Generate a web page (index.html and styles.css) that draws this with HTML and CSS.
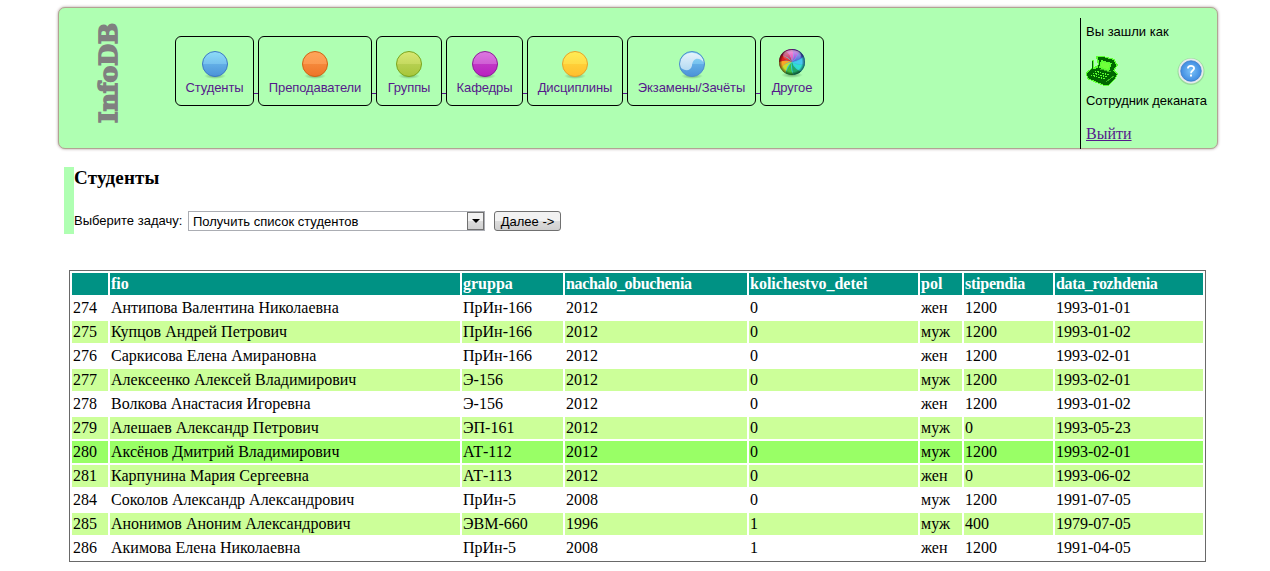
FILE: index.html
```
<!DOCTYPE html>
<html lang="ru">
<head>
<meta charset="utf-8">
<title>InfoDB</title>
<link rel="stylesheet" href="styles.css">
</head>
<body>
<svg class="defs" width="0" height="0">
  <defs>
    <linearGradient id="blue" x2="0" y2="1"><stop offset="0" stop-color="#8edcf8"/><stop offset=".5" stop-color="#76c1ee"/><stop offset=".5" stop-color="#62aee6"/><stop offset="1" stop-color="#4b92d8"/></linearGradient>
    <linearGradient id="orange" x2="0" y2="1"><stop offset="0" stop-color="#ffa55a"/><stop offset=".5" stop-color="#fb9a50"/><stop offset=".5" stop-color="#f5873a"/><stop offset="1" stop-color="#ee7427"/></linearGradient>
    <linearGradient id="green" x2="0" y2="1"><stop offset="0" stop-color="#d8e873"/><stop offset=".5" stop-color="#c5da60"/><stop offset=".5" stop-color="#b6cf50"/><stop offset="1" stop-color="#a7c63a"/></linearGradient>
    <linearGradient id="purple" x2="0" y2="1"><stop offset="0" stop-color="#dc78e0"/><stop offset=".5" stop-color="#cf5fd4"/><stop offset=".5" stop-color="#c136c6"/><stop offset="1" stop-color="#b91fc0"/></linearGradient>
    <linearGradient id="yellow" x2="0" y2="1"><stop offset="0" stop-color="#ffec54"/><stop offset=".5" stop-color="#ffdc48"/><stop offset=".5" stop-color="#ffcf38"/><stop offset="1" stop-color="#ffbe2c"/></linearGradient>
    <linearGradient id="pale" x2="0" y2="1"><stop offset="0" stop-color="#e6f3fb"/><stop offset="1" stop-color="#b5daf3"/></linearGradient>
    <radialGradient id="shade"><stop offset="0" stop-color="#3a6a3c" stop-opacity=".55"/><stop offset="1" stop-color="#3a6a3c" stop-opacity="0"/></radialGradient>
    <radialGradient id="help"><stop offset="0" stop-color="#7cc4fa"/><stop offset="1" stop-color="#3f8be0"/></radialGradient>
    <radialGradient id="rim"><stop offset=".75" stop-color="#000" stop-opacity="0"/><stop offset="1" stop-color="#000" stop-opacity=".6"/></radialGradient>
    <linearGradient id="gloss" x2="0" y2="1"><stop offset="0" stop-color="#fff" stop-opacity=".55"/><stop offset="1" stop-color="#fff" stop-opacity=".05"/></linearGradient>
    <clipPath id="disc"><circle cx="16" cy="14" r="13"/></clipPath>
    <path id="blade" d="M0 0Q7 -3 8 -15L20 -12Q13 -2 0 0z"/>
  </defs>
</svg>
<header class="header">
  <div class="brand"><span class="logo">InfoDB</span></div>
  <nav class="menu">
    <a class="item students" href="#"><svg class="ico" viewBox="0 0 32 32"><ellipse cx="16" cy="28" rx="11" ry="3" fill="url(#shade)"/><circle cx="16" cy="16" r="12.5" fill="url(#blue)" stroke="#3c78c4"/></svg><span>Студенты</span></a>
    <a class="item teachers" href="#"><svg class="ico" viewBox="0 0 32 32"><ellipse cx="16" cy="28" rx="11" ry="3" fill="url(#shade)"/><circle cx="16" cy="16" r="12.5" fill="url(#orange)" stroke="#ce6414"/></svg><span>Преподаватели</span></a>
    <a class="item groups" href="#"><svg class="ico" viewBox="0 0 32 32"><ellipse cx="16" cy="28" rx="11" ry="3" fill="url(#shade)"/><circle cx="16" cy="16" r="12.5" fill="url(#green)" stroke="#7ba51c"/></svg><span>Группы</span></a>
    <a class="item chairs" href="#"><svg class="ico" viewBox="0 0 32 32"><ellipse cx="16" cy="28" rx="11" ry="3" fill="url(#shade)"/><circle cx="16" cy="16" r="12.5" fill="url(#purple)" stroke="#8b1c98"/></svg><span>Кафедры</span></a>
    <a class="item subjects" href="#"><svg class="ico" viewBox="0 0 32 32"><ellipse cx="16" cy="28" rx="11" ry="3" fill="url(#shade)"/><circle cx="16" cy="16" r="12.5" fill="url(#yellow)" stroke="#e5a32a"/></svg><span>Дисциплины</span></a>
    <a class="item exams" href="#"><svg class="ico" viewBox="0 0 32 32"><ellipse cx="16" cy="28" rx="11" ry="3" fill="url(#shade)"/><circle cx="16" cy="16" r="12.5" fill="url(#blue)"/><path d="M3.500 17C5 23 15 24.500 16 17.500C16.500 10 23 8 28.300 15A12.500 12.500 0 0 0 3.500 17z" fill="url(#pale)"/><circle cx="16" cy="16" r="12.500" fill="none" stroke="#4d8ccb"/></svg><span>Экзамены/Зачёты</span></a>
    <a class="item other" href="#"><svg class="ico" viewBox="0 0 32 32"><ellipse cx="16" cy="27" rx="11" ry="3" fill="url(#shade)"/>
      <g clip-path="url(#disc)"><rect width="32" height="32" fill="#38c8d8"/>
        <g transform="translate(16 14)">
          <use href="#blade" fill="#4a62d8" transform="rotate(-5)"/>
          <use href="#blade" fill="#46c8f0" transform="rotate(31)"/>
          <use href="#blade" fill="#30e0d0" transform="rotate(67)"/>
          <use href="#blade" fill="#20a868" transform="rotate(103)"/>
          <use href="#blade" fill="#40c040" transform="rotate(139)"/>
          <use href="#blade" fill="#c8e030" transform="rotate(175)"/>
          <use href="#blade" fill="#f8a828" transform="rotate(205)"/>
          <use href="#blade" fill="#e02020" transform="rotate(235)"/>
          <use href="#blade" fill="#c01850" transform="rotate(267)"/>
          <use href="#blade" fill="#e030b0" transform="rotate(295)"/>
          <use href="#blade" fill="#9430d8" transform="rotate(325)"/>
        </g>
      </g>
      <circle cx="16" cy="14" r="13" fill="url(#rim)"/><ellipse cx="16" cy="7.500" rx="9" ry="5.500" fill="url(#gloss)"/></svg><span>Другое</span></a>
  </nav>
  <div class="user">
    <div class="line who">Вы зашли как</div>
    <div class="icons">
      <svg class="laptop" viewBox="0 0 32 30" shape-rendering="crispEdges">
        <path d="M10 0H17L29 3L30 6L32 9L29 14L32 18L30 22L22 30H18L1 23L0 16L6 12V4H8V11L12 9L11 5z" fill="#5cff33"/>
        <path d="M12 1H17L28 4L29 7L30.500 9L27 15L31 18L29 22L22 29H18L2 22L1 17L6 13V5H7V13L12 12L13 6z" fill="#006600"/>
        <path d="M15 4L26 7L23 15L13 12z" fill="#5cff33"/>
        <path d="M16 6L24 8L22 13L15 11z" fill="#70ff3c"/>
        <path d="M9 15L23 19M7 17L21 21M5 19L19 23" fill="none" stroke="#5cff33" stroke-dasharray="1.500 1"/>
        <path d="M20 26L28 20M14 13L25 16" fill="none" stroke="#38b820"/>
      </svg>
      <svg class="help" viewBox="0 0 30 30"><circle cx="15" cy="15.500" r="13.500" fill="#7aa47b" opacity=".4"/><circle cx="15" cy="15" r="12.500" fill="#e6eaec"/><circle cx="15" cy="15" r="10.300" fill="url(#help)" stroke="#3779c5" stroke-width=".7"/><path d="M11.900 12.500C11.900 9 18.100 9 18.100 12.300C18.100 14.600 15 14.600 15 17.300" fill="none" stroke="#fff" stroke-width="1.800"/><rect x="14" y="18.500" width="2" height="2" fill="#fff"/></svg>
    </div>
    <div class="line role">Сотрудник деканата</div>
    <a class="exit" href="#">Выйти</a>
  </div>
</header>
<main class="content">
  <section class="task">
    <h3>Студенты</h3>
    <form class="form">
      <label>Выберите задачу:</label>
      <div class="select"><span>Получить список студентов</span><i class="arrow"></i></div>
      <button class="next" type="button">Далее -&gt;</button>
    </form>
  </section>
  <table class="data">
    <colgroup><col class="c1"><col class="c2"><col class="c3"><col class="c4"><col class="c5"><col class="c6"><col class="c7"><col class="c8"></colgroup>
    <tr><th></th><th>fio</th><th>gruppa</th><th class="tight">nachalo_obuchenia</th><th>kolichestvo_detei</th><th>pol</th><th class="snug">stipendia</th><th class="tight">data_rozhdenia</th></tr>
    <tr><td>274</td><td>Антипова Валентина Николаевна</td><td>ПрИн-166</td><td>2012</td><td>0</td><td>жен</td><td>1200</td><td>1993-01-01</td></tr>
    <tr class="alt"><td>275</td><td>Купцов Андрей Петрович</td><td>ПрИн-166</td><td>2012</td><td>0</td><td>муж</td><td>1200</td><td>1993-01-02</td></tr>
    <tr><td>276</td><td>Саркисова Елена Амирановна</td><td>ПрИн-166</td><td>2012</td><td>0</td><td>жен</td><td>1200</td><td>1993-02-01</td></tr>
    <tr class="alt"><td>277</td><td>Алексеенко Алексей Владимирович</td><td>Э-156</td><td>2012</td><td>0</td><td>муж</td><td>1200</td><td>1993-02-01</td></tr>
    <tr><td>278</td><td>Волкова Анастасия Игоревна</td><td>Э-156</td><td>2012</td><td>0</td><td>жен</td><td>1200</td><td>1993-01-02</td></tr>
    <tr class="alt"><td>279</td><td>Алешаев Александр Петрович</td><td>ЭП-161</td><td>2012</td><td>0</td><td>муж</td><td>0</td><td>1993-05-23</td></tr>
    <tr class="hover"><td>280</td><td>Аксёнов Дмитрий Владимирович</td><td>АТ-112</td><td>2012</td><td>0</td><td>муж</td><td>1200</td><td>1993-02-01</td></tr>
    <tr class="alt"><td>281</td><td>Карпунина Мария Сергеевна</td><td>АТ-113</td><td>2012</td><td>0</td><td>жен</td><td>0</td><td>1993-06-02</td></tr>
    <tr><td>284</td><td>Соколов Александр Александрович</td><td>ПрИн-5</td><td>2008</td><td>0</td><td>муж</td><td>1200</td><td>1991-07-05</td></tr>
    <tr class="alt"><td>285</td><td>Анонимов Аноним Александрович</td><td>ЭВМ-660</td><td>1996</td><td>1</td><td>муж</td><td>400</td><td>1979-07-05</td></tr>
    <tr><td>286</td><td>Акимова Елена Николаевна</td><td>ПрИн-5</td><td>2008</td><td>1</td><td>жен</td><td>1200</td><td>1991-04-05</td></tr>
  </table>
</main>
</body>
</html>
```
FILE: styles.css
```
* { box-sizing: border-box; }
body { margin: 0; padding: 7px 52px 0 58px; background: #fff; color: #000; font: 16px/18px "Liberation Serif", serif; overflow: hidden; }
.defs { display: block; height: 0; }
.header { display: flex; height: 142px; background: #afffb2; border: 1px solid #b3a393; border-radius: 7px; box-shadow: 0 0 3px #a99; font-family: "Liberation Sans", sans-serif; font-size: 13px; }
.brand { width: 116px; padding: 12px 0 0 36px; }
.logo { display: block; writing-mode: vertical-rl; transform: rotate(180deg); width: 28px; height: 103px; line-height: 28px; font-family: "DejaVu Serif", serif; font-weight: bold; font-size: 25px; letter-spacing: 0; color: #808080; -webkit-text-stroke: 1.6px #808080; }
.menu { display: flex; gap: 4px; padding-top: 28px; }
.item { position: relative; display: flex; flex-direction: column; align-items: center; height: 70px; padding-top: 11px; border: 1px solid #000; border-radius: 6px; color: #551a8b; line-height: 16px; letter-spacing: -.1px; text-decoration: none; white-space: nowrap; }
.item:not(:last-child)::after { content: ""; position: absolute; left: 100%; top: 56px; width: 4px; height: 1px; margin-left: 1px; background: #551a8b; }
.ico { display: block; width: 32px; height: 32px; flex: none; }
.students { width: 79px; }
.teachers { width: 114px; }
.groups { width: 66px; }
.chairs { width: 77px; }
.subjects { width: 96px; }
.exams { width: 129px; }
.other { width: 64px; }
.user { width: 137px; height: 131px; margin: 10px 0 0 auto; padding-left: 5px; border-left: 1px solid #000; }
.line { line-height: 16px; white-space: nowrap; }
.who { padding-top: 6px; }
.icons { display: flex; justify-content: space-between; width: 120px; height: 53px; padding-top: 16px; }
.laptop { width: 32px; height: 30px; }
.help { width: 30px; height: 30px; }
.role { letter-spacing: -.05px; }
.exit { display: inline-block; margin-top: 16px; font: 16px/18px "Liberation Serif", serif; color: #551a8b; }
.content { padding: 18px 0 0 6px; }
.task { width: 600px; height: 67px; border-left: 10px solid #afffb2; }
h3 { margin: 0; font-size: 19px; line-height: 22px; letter-spacing: .2px; }
.form { display: flex; align-items: center; height: 21px; margin-top: 21px; font: 13px/16px "Liberation Sans", sans-serif; white-space: nowrap; }
.form label { width: 114px; padding-top: 1px; }
.select { display: flex; justify-content: space-between; width: 297px; height: 20px; padding-left: 4px; line-height: 19px; border: 1px solid #abadb3; }
.arrow { display: flex; align-items: center; justify-content: center; width: 17px; height: 18px; border: 1px solid #707070; background: linear-gradient(#f2f2f2 50%, #dcdcdc 50%, #d0d0d0); }
.arrow::after { content: ""; border: 4px solid transparent; border-top-color: #000; border-bottom: 0; }
.next { width: 67px; height: 20px; margin-left: 9px; padding: 1px 0 0; font: 13px/17px "Liberation Sans", sans-serif; color: #000; border: 1px solid #707070; border-radius: 3px; background: linear-gradient(#f2f2f2 50%, #dddddd 50%, #cfcfcf); }
.data { width: 1137px; margin: 36px 0 0 5px; table-layout: fixed; border: 1px solid #696969; border-spacing: 2px; }
.data tr { height: 22px; }
.data th { padding: 1px; text-align: left; color: #fff; background: #009284; }
.data td { padding: 1px; white-space: nowrap; }
.data .tight { letter-spacing: -.35px; }
.data .snug { letter-spacing: -.25px; }
.alt td { background: #ccff99; }
.hover td { background: #99ff66; }
.c1 { width: 36px; }
.c2 { width: 350px; }
.c3 { width: 101px; }
.c4 { width: 182px; }
.c5 { width: 169px; }
.c6 { width: 42px; }
.c7 { width: 89px; }
.c8 { width: 148px; }
```
